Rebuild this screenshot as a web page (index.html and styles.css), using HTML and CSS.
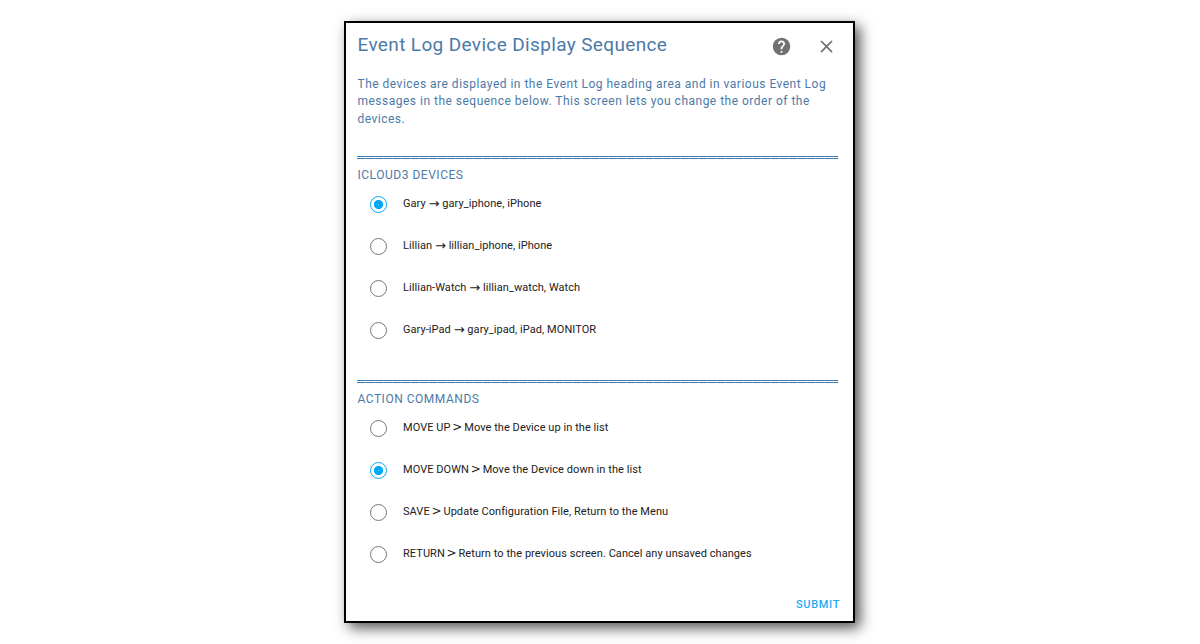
FILE: index.html
```html
<!DOCTYPE html>
<html lang="en">
<head>
<meta charset="utf-8">
<title>Event Log Device Display Sequence</title>
<link rel="stylesheet" href="styles.css">
</head>
<body>
<main class="dialog">
  <header class="header">
    <h1 class="title">Event Log Device Display Sequence</h1>
    <svg class="help" viewBox="0 0 24 24"><path d="M15.07 11.25l-.9.92C13.45 12.89 13 13.5 13 15h-2v-.5c0-1.11.45-2.11 1.17-2.83l1.24-1.26c.37-.36.59-.86.59-1.41a2 2 0 0 0-2-2 2 2 0 0 0-2 2H8a4 4 0 0 1 4-4 4 4 0 0 1 4 4c0 .88-.36 1.67-.93 2.25M13 19h-2v-2h2M12 2A10 10 0 0 0 2 12a10 10 0 0 0 10 10 10 10 0 0 0 10-10C22 6.47 17.5 2 12 2z"/></svg>
    <svg class="close" viewBox="0 0 24 24"><path d="M19 6.41L17.59 5 12 10.59 6.41 5 5 6.41 10.59 12 5 17.59 6.41 19 12 13.41 17.59 19 19 17.59 13.41 12z"/></svg>
  </header>
  <p class="intro">The devices are displayed in the Event Log heading area and in various Event Log messages in the sequence below. This screen lets you change the order of the devices.</p>
  <section class="group">
    <div class="rule"></div>
    <h2 class="heading">ICLOUD3 DEVICES</h2>
    <label class="option"><span class="radio checked"></span><span>Gary <span class="arrow">→</span> gary_iphone, iPhone</span></label>
    <label class="option"><span class="radio"></span><span>Lillian <span class="arrow">→</span> lillian_iphone, iPhone</span></label>
    <label class="option"><span class="radio"></span><span>Lillian-Watch <span class="arrow">→</span> lillian_watch, Watch</span></label>
    <label class="option"><span class="radio"></span><span>Gary-iPad <span class="arrow">→</span> gary_ipad, iPad, MONITOR</span></label>
  </section>
  <section class="group">
    <div class="rule"></div>
    <h2 class="heading">ACTION COMMANDS</h2>
    <label class="option"><span class="radio"></span><span>MOVE UP <span class="gt">&gt;</span> Move the Device up in the list</span></label>
    <label class="option"><span class="radio checked"></span><span>MOVE DOWN <span class="gt">&gt;</span> Move the Device down in the list</span></label>
    <label class="option"><span class="radio"></span><span>SAVE <span class="gt">&gt;</span> Update Configuration File, Return to the Menu</span></label>
    <label class="option"><span class="radio"></span><span>RETURN <span class="gt">&gt;</span> Return to the previous screen. Cancel any unsaved changes</span></label>
  </section>
  <footer class="footer"><span class="submit">SUBMIT</span></footer>
</main>
</body>
</html>
```
FILE: styles.css
```css
* { box-sizing: border-box; }
body { margin: 0; height: 644px; overflow: hidden; background: #fff; font-family: Roboto, sans-serif; }
.dialog { width: 511px; height: 602px; margin: 21px 0 0 344px; border: 2px solid #000; background: #fff; box-shadow: 5px 5px 13px 0 rgba(0,0,0,.68); display: flex; flex-direction: column; color: #212121; }
.header { display: flex; height: 46px; padding: 0 16px 0 11.5px; align-items: center; flex: none; }
.title { margin: -3px 0 0; flex: 1; font-size: 19px; line-height: 24px; font-weight: 400; color: #4c7aa8; letter-spacing: .36px; white-space: nowrap; }
.help, .close { width: 21px; height: 21px; fill: #727272; }
.close { margin-left: 24px; }
.intro { margin: 6.5px 12px 0 11.5px; height: 53.5px; font-size: 12px; line-height: 17.5px; letter-spacing: .49px; color: #4c7aa8; flex: none; }
.group { height: 224px; padding: 27px 12px 0 11.5px; flex: none; }
/* Double line broken into short segments by pale seams */
.rule { width: 481px; height: 3px; margin-left: -.5px; background:
  linear-gradient(transparent 1px, #fff 1px, #fff 2px, transparent 2px),
  repeating-linear-gradient(90deg, #3f78ac 0, #3f78ac 8px, #6f9bc2 8px, #6f9bc2 9px); }
.heading { margin: 8px 0 0; font-size: 12px; line-height: 16px; font-weight: 400; letter-spacing: .52px; color: #4c7aa8; }
.option { display: flex; align-items: center; height: 42px; padding-left: 12.5px; gap: 16px; font-size: 11px; line-height: 16px; letter-spacing: .06px; white-space: nowrap; }
.radio { width: 17px; height: 17px; border: 1px solid #777; border-radius: 50%; }
.checked { border-color: #03a9f4; background: radial-gradient(circle, #5fc9f8 .5px, #03a9f4 1px, #03a9f4 4.2px, transparent 5px); }
.arrow { font: 13px/1 "DejaVu Sans", sans-serif; vertical-align: -1px; }
.gt { font: 12px/1 "DejaVu Sans", sans-serif; margin: 0 -1px; }
.footer { display: flex; justify-content: flex-end; padding: 20px 13px 0; }
.submit { font-size: 11px; line-height: 16px; font-weight: 500; letter-spacing: .65px; color: #1eabf1; }
```
